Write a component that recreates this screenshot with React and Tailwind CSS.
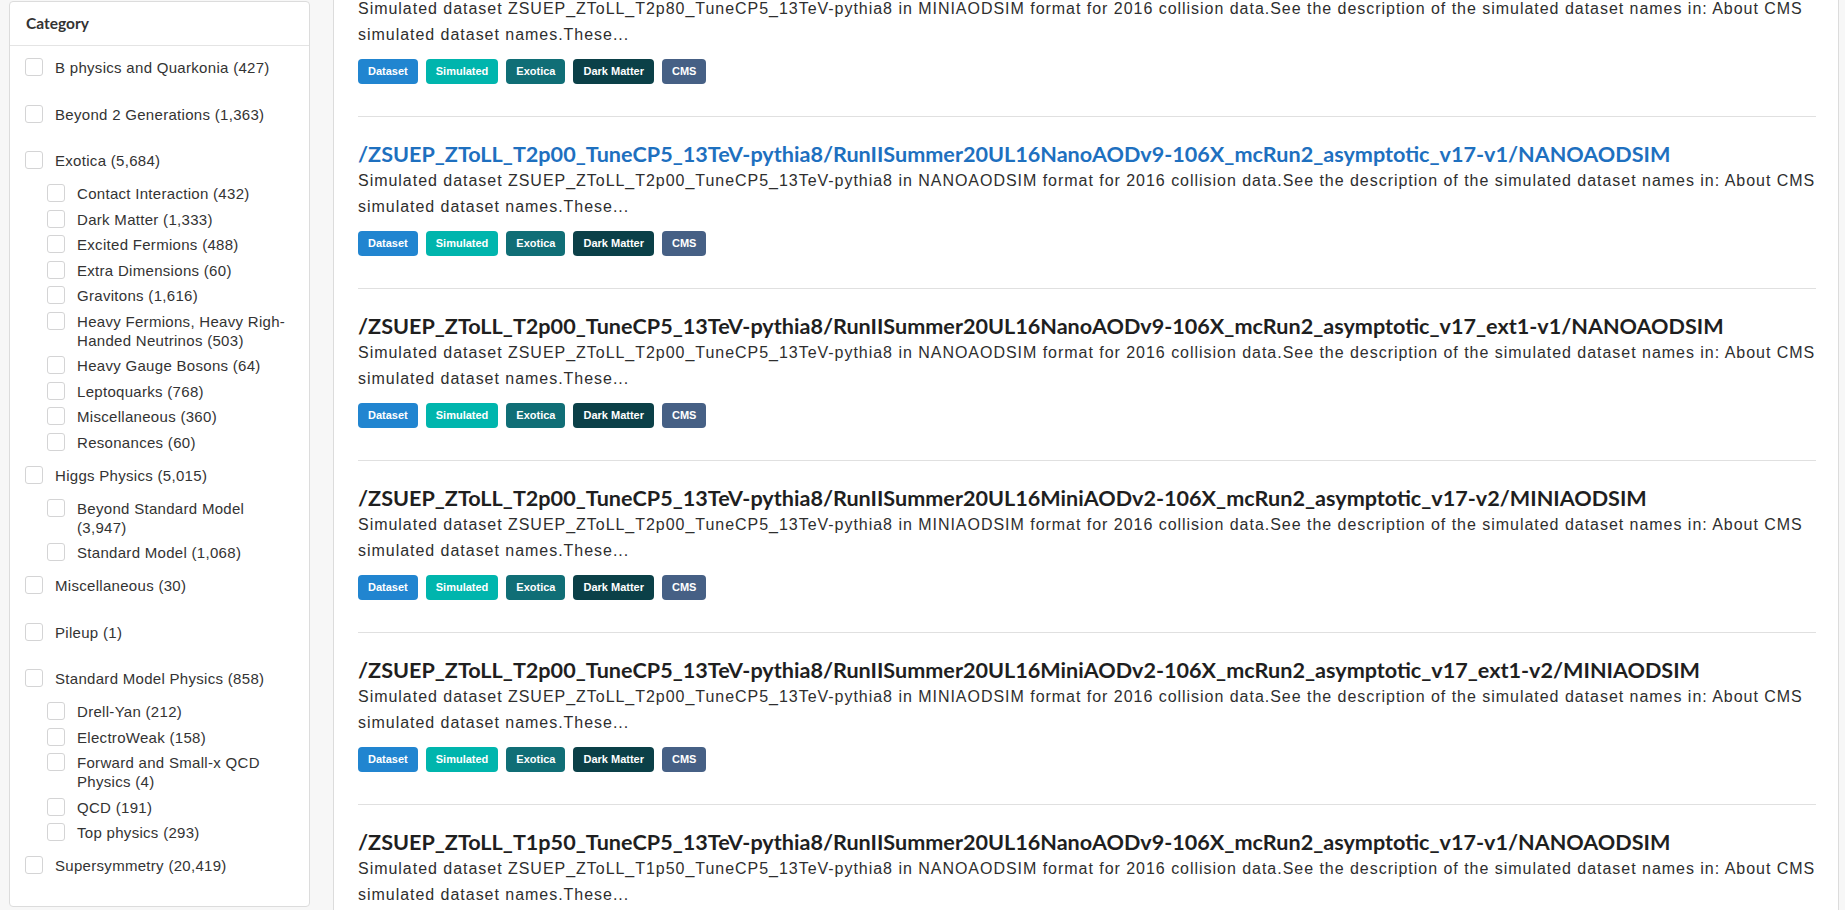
import React from 'react';

const categories = [
  { name: 'B physics and Quarkonia (427)' },
  { name: 'Beyond 2 Generations (1,363)' },
  {
    name: 'Exotica (5,684)',
    children: [
      'Contact Interaction (432)',
      'Dark Matter (1,333)',
      'Excited Fermions (488)',
      'Extra Dimensions (60)',
      'Gravitons (1,616)',
      'Heavy Fermions, Heavy Righ-Handed Neutrinos (503)',
      'Heavy Gauge Bosons (64)',
      'Leptoquarks (768)',
      'Miscellaneous (360)',
      'Resonances (60)',
    ],
  },
  {
    name: 'Higgs Physics (5,015)',
    children: ['Beyond Standard Model (3,947)', 'Standard Model (1,068)'],
  },
  { name: 'Miscellaneous (30)' },
  { name: 'Pileup (1)' },
  {
    name: 'Standard Model Physics (858)',
    children: [
      'Drell-Yan (212)',
      'ElectroWeak (158)',
      'Forward and Small-x QCD Physics (4)',
      'QCD (191)',
      'Top physics (293)',
    ],
  },
  { name: 'Supersymmetry (20,419)' },
];

const descFor = (tune, fmt) =>
  `Simulated dataset ZSUEP_ZToLL_${tune}_TuneCP5_13TeV-pythia8 in ${fmt} format for 2016 collision data.See the description of the simulated dataset names in: About CMS simulated dataset names.These...`;

const records = [
  {
    title: '/ZSUEP_ZToLL_T2p80_TuneCP5_13TeV-pythia8/RunIISummer20UL16MiniAODv2-106X_mcRun2_asymptotic_v17-v2/MINIAODSIM',
    desc: descFor('T2p80', 'MINIAODSIM'),
  },
  {
    title: '/ZSUEP_ZToLL_T2p00_TuneCP5_13TeV-pythia8/RunIISummer20UL16NanoAODv9-106X_mcRun2_asymptotic_v17-v1/NANOAODSIM',
    desc: descFor('T2p00', 'NANOAODSIM'),
    active: true,
  },
  {
    title: '/ZSUEP_ZToLL_T2p00_TuneCP5_13TeV-pythia8/RunIISummer20UL16NanoAODv9-106X_mcRun2_asymptotic_v17_ext1-v1/NANOAODSIM',
    desc: descFor('T2p00', 'NANOAODSIM'),
  },
  {
    title: '/ZSUEP_ZToLL_T2p00_TuneCP5_13TeV-pythia8/RunIISummer20UL16MiniAODv2-106X_mcRun2_asymptotic_v17-v2/MINIAODSIM',
    desc: descFor('T2p00', 'MINIAODSIM'),
  },
  {
    title: '/ZSUEP_ZToLL_T2p00_TuneCP5_13TeV-pythia8/RunIISummer20UL16MiniAODv2-106X_mcRun2_asymptotic_v17_ext1-v2/MINIAODSIM',
    desc: descFor('T2p00', 'MINIAODSIM'),
  },
  {
    title: '/ZSUEP_ZToLL_T1p50_TuneCP5_13TeV-pythia8/RunIISummer20UL16NanoAODv9-106X_mcRun2_asymptotic_v17-v1/NANOAODSIM',
    desc: descFor('T1p50', 'NANOAODSIM'),
  },
];

const tags = [
  { label: 'Dataset', cls: 'bg-[#2185d0]' },
  { label: 'Simulated', cls: 'bg-[#00b5ad]' },
  { label: 'Exotica', cls: 'bg-[#106e76]' },
  { label: 'Dark Matter', cls: 'bg-[#0b4048]' },
  { label: 'CMS', cls: 'bg-[#466085]' },
];

function Box() {
  return <span className="shrink-0 w-[18px] h-[18px] rounded-[3px] border border-[#d4d4d5] bg-white" />;
}

function CategoryRow({ label, sub, mt }) {
  return (
    <label className={`flex items-start gap-[12px] ${sub ? 'pl-[22px]' : ''} ${mt}`}>
      <Box />
      <span className="leading-[19px]">{label}</span>
    </label>
  );
}

function Sidebar() {
  // flatten so spacing between top-level and nested rows can differ
  const rows = [];
  let prev = null;
  categories.forEach((c) => {
    let mt = 'mt-[27.5px]';
    if (prev === null) mt = 'mt-0';
    else if (prev === 'child') mt = 'mt-[14px]';
    rows.push(<CategoryRow key={c.name} label={c.name} mt={mt} />);
    prev = 'top';
    (c.children || []).forEach((ch) => {
      rows.push(
        <CategoryRow key={c.name + ch} label={ch} sub mt={prev === 'top' ? 'mt-[14px]' : 'mt-[6.5px]'} />
      );
      prev = 'child';
    });
  });

  return (
    <aside className="w-[333px] shrink-0 pl-[9px] pt-px">
      <div className="w-[301px] bg-white border border-[#dcdcdc] rounded-[4px]">
        <div className="h-[44px] flex items-center px-[16px] border-b border-[#e4e4e4] font-[family-name:Lato,sans-serif] font-bold text-[15.5px] text-[#333]">
          Category
        </div>
        <div className="pl-[15px] pr-[20px] pt-[12px] pb-[31px] text-[15px] tracking-[0.3px] text-[#333] font-[family-name:'Liberation_Sans',Arial,sans-serif]">
          {rows}
        </div>
      </div>
    </aside>
  );
}

function Record({ rec, first }) {
  return (
    <div className={`pt-[24px] pb-[32px] ${first ? '' : 'border-t border-[#e0e0e0]'}`}>
      <div
        className={`font-[family-name:Lato,sans-serif] font-bold text-[21.6px] leading-[26px] whitespace-nowrap ${
          rec.active ? 'text-[#1e70bf]' : 'text-[#1f1f1f]'
        }`}
      >
        {rec.title}
      </div>
      <p className="-mr-[14px] pt-[1px] font-[family-name:'Liberation_Sans',Arial,sans-serif] text-[16px] tracking-[0.97px] leading-[26px] text-[#2e2e2e]">
        {rec.desc}
      </p>
      <div className="flex gap-[8px] mt-[11px]">
        {tags.map((t) => (
          <span
            key={t.label}
            className={`${t.cls} h-[25px] px-[10px] rounded-[4px] flex items-center text-white text-[11px] font-bold font-[family-name:'Liberation_Sans',Arial,sans-serif]`}
          >
            {t.label}
          </span>
        ))}
      </div>
    </div>
  );
}

export default function App() {
  return (
    <div className="h-[910px] overflow-hidden flex bg-[#f7f7f7]">
      <Sidebar />
      <main className="w-[1506px] shrink-0 h-full overflow-hidden bg-white border-x border-[#dcdcdc] pl-[24px] pr-[22px]">
        <div className="-mt-[55px]">
          {records.map((r, i) => (
            <Record key={i} rec={r} first={i === 0} />
          ))}
        </div>
      </main>
    </div>
  );
}
